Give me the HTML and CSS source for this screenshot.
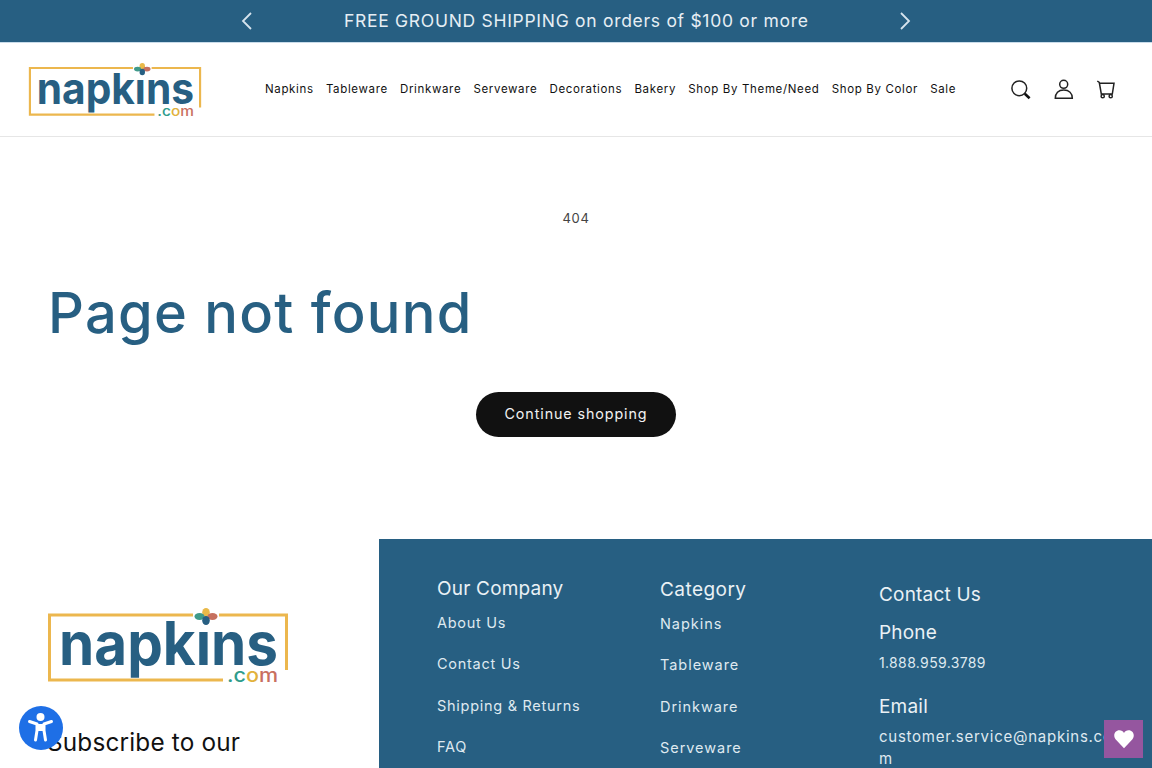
FILE: index.html
```html
<!DOCTYPE html>
<html lang="en">
<head>
<meta charset="utf-8">
<title>404 Not Found – Napkins.com</title>
<link rel="stylesheet" href="styles.css">
</head>
<body>
<div class="announce">
  <svg class="chev" viewBox="0 0 12 20"><path d="M10 2 2 10l8 8"/></svg>
  <p class="announce-text">FREE GROUND SHIPPING on orders of $100 or more</p>
  <svg class="chev" viewBox="0 0 12 20"><path d="M2 2l8 8-8 8"/></svg>
</div>
<header class="header">
  <svg class="logo-small" viewBox="0 0 240 78">
    <use href="#logo"/>
  </svg>
  <nav class="nav">
    <a>Napkins</a><a>Tableware</a><a>Drinkware</a><a>Serveware</a><a>Decorations</a><a>Bakery</a><a>Shop By Theme/Need</a><a>Shop By Color</a><a>Sale</a>
  </nav>
  <div class="icons">
    <svg class="icon" viewBox="0 0 22 22"><circle cx="9.300" cy="10.300" r="7.400" class="thin"/><path d="M14.800 15.800l4.800 4.400" class="thick"/></svg>
    <svg class="icon" viewBox="0 0 22 22"><circle cx="11.700" cy="6.300" r="4" class="thin"/><path d="M3.300 20.300c0-5 3-8.300 8.400-8.300s8.600 3.300 8.600 8.300z" class="thin"/></svg>
    <svg class="icon" viewBox="0 0 22 22"><path d="M3.300 3l2 1.500 2 11.500h11l1.700-10.700H5.500" class="thin"/><circle cx="8.700" cy="18.200" r="1.600" class="thin"/><circle cx="16.700" cy="18.200" r="1.600" class="thin"/></svg>
  </div>
</header>
<main class="main">
  <p class="code">404</p>
  <h1 class="title">Page not found</h1>
  <a class="btn">Continue shopping</a>
</main>
<footer class="footer">
  <div class="foot-left">
    <svg class="logo-big" viewBox="0 0 240 78">
      <defs>
        <g id="logo">
          <path class="frame" d="M145 7H1.500v65H175M171 7h67.500v55"/>
          <text class="logo-word" x="11" y="57" textLength="219" lengthAdjust="spacingAndGlyphs">napkins</text>
          <text class="logo-dot" x="179" y="74" textLength="51" lengthAdjust="spacingAndGlyphs"><tspan fill="#2f9c8c">.c</tspan><tspan fill="#e2b23c">o</tspan><tspan fill="#c9705f">m</tspan></text>
          <rect class="logo-clear" x="146" y="0" width="24" height="20"/>
          <ellipse cx="158" cy="4.500" rx="3.800" ry="4.500" fill="#e9b949"/>
          <ellipse cx="151.500" cy="8.500" rx="5" ry="3.400" fill="#3f9a8a"/>
          <ellipse cx="164.500" cy="8.500" rx="5" ry="3.400" fill="#c6705f"/>
          <ellipse cx="158" cy="12.500" rx="3.800" ry="4.500" fill="#275f82"/>
        </g>
      </defs>
      <use href="#logo"/>
    </svg>
    <h2 class="subscribe">Subscribe to our</h2>
  </div>
  <div class="foot-right">
    <section class="col col-company">
      <h3 class="col-head">Our Company</h3>
      <ul class="links">
        <li>About Us</li><li>Contact Us</li><li>Shipping &amp; Returns</li><li>FAQ</li>
      </ul>
    </section>
    <section class="col col-category">
      <h3 class="col-head">Category</h3>
      <ul class="links">
        <li>Napkins</li><li>Tableware</li><li>Drinkware</li><li>Serveware</li>
      </ul>
    </section>
    <section class="col col-contact">
      <h3 class="col-head">Contact Us</h3>
      <h3 class="col-head sub">Phone</h3>
      <p class="line phone">1.888.959.3789</p>
      <h3 class="col-head sub email-head">Email</h3>
      <p class="line mail">customer.service@napkins.com</p>
    </section>
  </div>
</footer>
<a class="a11y">
  <svg viewBox="0 0 44 44"><circle cx="21.500" cy="11" r="4" fill="#fff"/><rect x="18" y="18" width="7" height="7" fill="#fff"/><path d="M10.500 15.500 18 18v6.500L16.500 34M32.500 15.500 25 18v6.500L26.500 34" class="a11y-body"/></svg>
</a>
<a class="wish">
  <svg viewBox="0 0 24 24"><path d="M12 22 3 12.500C-.5 8 2 2.500 7 2.500c2.200 0 4 1 5 3 1-2 2.800-3 5-3 5 0 7.500 5.500 4 10z" fill="#fff"/></svg>
</a>
</body>
</html>
```
FILE: styles.css
```css
* { box-sizing: border-box; }
html, body { margin: 0; padding: 0; height: 768px; overflow: hidden; }
body { font-family: "Inter", "Open Sans", sans-serif; color: #111; background: #fff; }
p, h1, h2, h3, ul { margin: 0; padding: 0; font-weight: 400; }
ul { list-style: none; }

.announce { height: 43px; background: #275f82; border-bottom: 1px solid #c9dcea; display: flex; align-items: center; justify-content: center; gap: 91px; }
.announce-text { color: #e6eef4; font-size: 17.500px; letter-spacing: .71px; width: 464px; text-align: center; white-space: nowrap; margin-bottom: 1px; }
.chev { width: 12px; height: 20px; fill: none; stroke: #d6e4ee; stroke-width: 1.800; }

.header { height: 94px; border-bottom: 1px solid #e6e6e6; display: flex; align-items: center; padding: 0 36px 2px 28px; }
.logo-small { width: 174px; height: 56px; flex: none; margin-top: 5px; }
.nav { display: flex; gap: 12.200px; margin-left: 63px; flex: 1; }
.nav a { font-size: 11.500px; letter-spacing: .65px; color: #111; white-space: nowrap; }
.icons { display: flex; gap: 20px; align-items: center; margin-top: 1px; }
.icon { width: 22px; height: 22px; }
.thin { fill: none; stroke: #222; stroke-width: 1.500; }
.thick { fill: none; stroke: #111; stroke-width: 2.600; }

.main { display: flex; flex-direction: column; height: 402px; padding: 72px 48px 0; }
.code { text-align: center; font-size: 13px; letter-spacing: .6px; color: #444; line-height: 18px; }
.title { color: #275f82; font-size: 56px; line-height: 72px; letter-spacing: 1.250px; margin-top: 50px; font-weight: 500; }
.btn { align-self: center; margin-top: 43px; width: 200px; height: 45px; padding-bottom: 2px; border-radius: 23px; background: #111; color: #f2f2f2; font-size: 14.300px; letter-spacing: .9px; display: flex; align-items: center; justify-content: center; }

.footer { display: flex; height: 400px; }
.foot-left { width: 379px; flex: none; padding: 69px 0 0 48px; }
.logo-big { display: block; width: 240px; height: 78px; }
.frame { fill: none; stroke: #ecb74e; stroke-width: 3; }
.logo-word { font-family: "Inter", sans-serif; font-weight: 700; font-size: 60px; fill: #275f82; }
.logo-dot { font-family: "Inter", sans-serif; font-size: 19px; font-weight: 500; }
.logo-clear { fill: #fff; }
.subscribe { font-size: 24.300px; letter-spacing: .2px; margin-top: 40px; line-height: 32px; color: #111; margin-left: -1px; }

.foot-right { flex: 1; background: #275f82; padding: 0 0 0 58px; display: flex; color: #dfe9f0; }
.col-head { font-size: 19px; letter-spacing: .2px; color: #eaf1f5; line-height: 26px; }
.col-company { width: 223px; padding-top: 37px; }
.col-category { width: 219px; padding-top: 38px; }
.col-category .col-head { letter-spacing: .45px; }
.col-category .links li { letter-spacing: .95px; }
.col-contact { flex: 1; padding: 43px 33px 0 0; }
.links { margin-top: 0; }
.links li { font-size: 14.500px; letter-spacing: .72px; line-height: 41.300px; }
.sub { margin-top: 12px; }
.line { font-size: 15px; letter-spacing: .75px; line-height: 22px; margin-top: 5px; overflow-wrap: anywhere; }
.phone { font-size: 14px; letter-spacing: .35px; margin-top: 6px; }
.email-head { margin-top: 20px; }
.mail { margin-top: 6px; }

.a11y { position: fixed; left: 19px; top: 706px; width: 44px; height: 44px; border-radius: 50%; background: #1e6fe6; }
.a11y svg { display: block; width: 44px; height: 44px; }
.a11y-body { fill: none; stroke: #fff; stroke-width: 3; stroke-linecap: round; stroke-linejoin: round; }
.wish { position: fixed; left: 1104px; top: 720px; width: 39px; height: 38px; background: #95569f; display: flex; align-items: center; justify-content: center; }
.wish svg { width: 22px; height: 22px; }
```
